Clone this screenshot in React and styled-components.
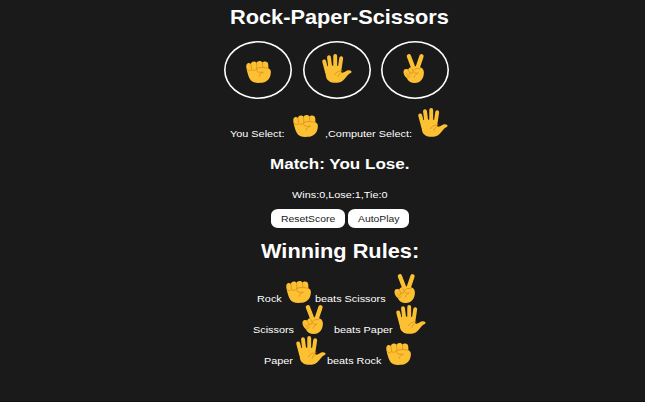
import React from "react";
import styled, { createGlobalStyle } from "styled-components";

const GlobalStyle = createGlobalStyle`
  body { margin: 0; background: #1a1a1a; overflow: hidden; }
  * { box-sizing: border-box; }
`;

const Page = styled.main`
  width: 645px;
  height: 402px;
  display: flex;
  flex-direction: column;
  background: #1a1a1a;
  border-bottom: 1px solid #111;
  color: #fff;
  font-family: "Liberation Sans", Arial, sans-serif;
`;

const Row = styled.div`
  display: flex;
  flex: none;
  align-items: flex-end;
  height: ${(p) => p.$h}px;
  padding-left: ${(p) => p.$left}px;
`;

const Label = styled.span`
  display: block;
  flex: none;
  width: ${(p) => p.$w}px;
  margin-right: ${(p) => p.$gap || 0}px;
  font-size: 9.9px;
  line-height: 12px;
  text-align: left;
  white-space: nowrap;
  transform: scaleX(1.1);
  transform-origin: left;
`;

const Title = styled.h1`
  margin: 0;
  font-size: 19.8px;
  line-height: 22px;
  font-weight: 700;
  white-space: nowrap;
  transform: scaleX(1.1);
  transform-origin: left;
`;

const Result = styled(Title)`
  font-size: 14.85px;
  line-height: 18px;
  transform: scaleX(1.148);
`;

const Choices = styled.div`
  display: flex;
  flex: none;
  height: 58px;
  margin-top: 13px;
  padding-left: 224px;
`;

const Choice = styled.button`
  width: 68px;
  height: 58px;
  margin: 0 ${(p) => p.$gap || 0}px 0 0;
  padding: ${(p) => p.$top}px 0 0 ${(p) => p.$inset}px;
  display: flex;
  align-items: flex-start;
  border: 0;
  border-radius: 50%;
  background: transparent;
  box-shadow: inset 0 0 0 1.6px #fff;
`;

const Pill = styled.button`
  width: ${(p) => p.$w}px;
  height: 19px;
  margin: 0 3px 0 0;
  padding: 0 0 0 10px;
  display: flex;
  align-items: center;
  border: 0;
  border-radius: 7px / 6px;
  background: #fff;
  color: #1a1a1a;
  font-family: inherit;
`;

const PillText = styled(Label)`
  font-size: 9.7px;
  transform: scaleX(1.07);
`;

const Icon = styled.svg`
  display: block;
  flex: none;
  width: ${(p) => p.$w}px;
  height: ${(p) => p.$h}px;
  margin-right: ${(p) => p.$gap || 0}px;
  margin-bottom: ${(p) => p.$lift || 0}px;
  overflow: visible;
`;

const YELLOW = "#fcc033";
const SHADE = "#dc8f19";

function Fist(props) {
  return (
    <Icon viewBox="0 0 25 22" $w={25} $h={22} aria-label="Rock" {...props}>
      <path fill={YELLOW} d="M.3 6.500C0 3.800.9 2.200 2.800 2.100c.9 0 1.600.4 2 1C5.300 1.100 6.300.400 7.900.400c1.300 0 2.200.500 2.700 1.500C11.100.700 12.100 0 13.500 0c1.500 0 2.500.600 3 1.700C17 .9 17.800.500 19 .500c2.100 0 3.200 1.200 3.300 3.300l.1 3.400c1.700.700 2.600 2.200 2.500 4.100-.1 4.500-2 7.400-5 9.300-2 1.200-4.600 1.400-7.500 1.400-4 0-7.200-1.300-8.700-4.200C2.300 15 .9 10.500.3 6.500Z" />
      <g fill="none" stroke={SHADE} strokeWidth=".8" strokeLinecap="round" strokeLinejoin="round">
        <path d="M4.900 3.200 5.600 8M10.600 2.200l.2 4.700M16.600 2l.1 4.500M1.200 8.600c.9 1.300 3.200 1.500 4.400-.1 1.200 1.200 3.500 1.100 5-.5M11 7.300c2.600-1.200 7.900-1 11.200 0M11 7.300c-1 2.100.1 3.800 2.300 4 1.400.1 2.700-.1 4.100-.1-2.500.7-4 2.300-4.200 4.200" />
      </g>
    </Icon>
  );
}

function Hand(props) {
  return (
    <Icon viewBox="0 0 30 29" $w={30} $h={29} aria-label="Paper" {...props}>
      <path
        fill="none"
        stroke={YELLOW}
        strokeWidth="3.900"
        strokeLinecap="round"
        d="M2.200 7.400 5 18M7 3.300 8.600 16M13.200 2V16M19.200 4.300 17.300 17"
      />
      <path fill={YELLOW} d="M3.100 17 4 12.500l4-1 10.700.5.2 5.200c.2 1.300 1 1.900 2.200 1.400 2.200-.9 3.300-2.300 5.500-2.400 2.300-.1 3.500 1.200 2.700 2.200-.5.7-1.700.9-2.700 1.800-2 1.700-3.200 4.200-5.300 6-2.100 1.800-4.500 2.600-7.800 2.600-5.300 0-8.500-2.300-9.400-5.800Z" />
      <path fill="none" stroke={SHADE} strokeWidth=".8" strokeLinecap="round" d="M20 16.800c-3.500-.1-6 1.200-7.500 3.900M16 22.500c.3-2.300 1.700-3.500 3.700-4.100" />
    </Icon>
  );
}

function Victory(props) {
  return (
    <Icon viewBox="0 0 22 29" $w={22} $h={29} aria-label="Scissors" {...props}>
      <path
        fill="none"
        stroke={YELLOW}
        strokeWidth="4.300"
        strokeLinecap="round"
        d="M5.900 2.300 10.400 14M18.500 2.300 14.200 15"
      />
      <path fill={YELLOW} d="m8.700 13 3-.8 4.700.7c2.800.6 4.500 2.500 4.500 5.500 0 6.200-3.500 10.500-9 10.500-4.200 0-6.800-1.700-8-4.700C1.900 22.500.7 20.600.5 18.400c-.2-2 .7-3.300 2.500-3.500 1-.1 1.700.1 2.200.6.7-1.500 1.900-2.200 3.500-2.500Z" />
      <path fill="none" stroke={SHADE} strokeWidth=".8" strokeLinecap="round" strokeLinejoin="round" d="m5.200 15.500 1.600 3.300c.7 1.700-.9 3-2.300 2.100L3 19.500M6.800 18.800c1.300 1.100 3.500.5 3.400-1.200L8.800 14.500M10.200 16.700c1.400-1.900 4-2.800 6.800-2M10.200 17.600c1.300 1.800 3.200 1.900 5 1.500-2 .4-3.600 1.900-3.900 4M3.800 23c1.100.7 2.500.5 3.500-.6" />
    </Icon>
  );
}

export default function App() {
  return (
    <>
      <GlobalStyle />
      <Page>
        <Row $h={28} $left={230}>
          <Title>Rock-Paper-Scissors</Title>
        </Row>
        <Choices>
          <Choice $gap={11} $inset={22} $top={20}><Fist /></Choice>
          <Choice $gap={10} $inset={19} $top={13}><Hand /></Choice>
          <Choice $inset={21.500} $top={13}><Victory /></Choice>
        </Choices>
        <Row $h={41} $left={230}>
          <Label $w={55} $gap={8}>You Select:</Label>
          <Fist $gap={7} $lift={3.500} />
          <Label $w={88} $gap={5}>,Computer Select:</Label>
          <Hand $lift={3.500} />
        </Row>
        <Row $h={33} $left={270}>
          <Result as="h2">Match: You Lose.</Result>
        </Row>
        <Row $h={28} $left={292}>
          <Label $w={97}>Wins:0,Lose:1,Tie:0</Label>
        </Row>
        <Row $h={27} $left={271}>
          <Pill $w={73.500}><PillText $w={54}>ResetScore</PillText></Pill>
          <Pill $w={61.500}><PillText $w={42}>AutoPlay</PillText></Pill>
        </Row>
        <Row $h={34} $left={260.500}>
          <Title as="h2">Winning Rules:</Title>
        </Row>
        <Row $h={43} $left={256.500}>
          <Label $w={25} $gap={4.500}>Rock</Label>
          <Fist $gap={4} $lift={2.500} />
          <Label $w={72} $gap={7}>beats Scissors</Label>
          <Victory $lift={2.500} />
        </Row>
        <Row $h={31} $left={252.500}>
          <Label $w={42} $gap={7.500}>Scissors</Label>
          <Victory $gap={10} $lift={2.500} />
          <Label $w={60} $gap={2}>beats Paper</Label>
          <Hand $lift={2.500} />
        </Row>
        <Row $h={31} $left={264}>
          <Label $w={30} $gap={2}>Paper</Label>
          <Hand $gap={1} $lift={2.500} />
          <Label $w={56} $gap={3}>beats Rock</Label>
          <Fist $lift={2.500} />
        </Row>
      </Page>
    </>
  );
}
